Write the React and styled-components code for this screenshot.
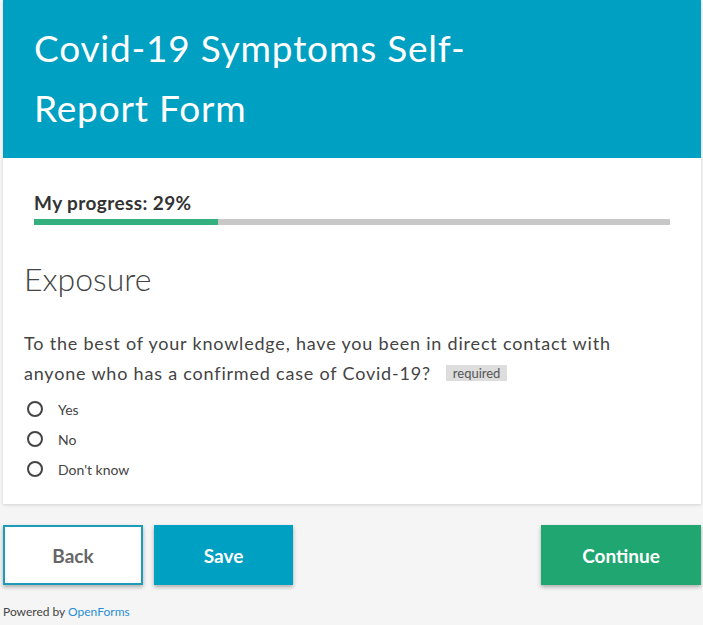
import React from "react";
import styled, { createGlobalStyle } from "styled-components";

const Global = createGlobalStyle`
  html, body { margin: 0; padding: 0; background: #f5f5f5; }
  body { font-family: Lato, "Open Sans", sans-serif; color: #444; }
`;

const Page = styled.div`
  padding: 0 2px 0 3px;
`;

const Card = styled.div`
  background: #fff;
  box-shadow: 0 1px 3px rgba(0, 0, 0, 0.15);
`;

const Header = styled.header`
  background: #00a0c2;
  padding: 18px 31px 20px;
`;

const Title = styled.h1`
  margin: 0;
  max-width: 500px;
  color: #fff;
  font-size: 37px;
  font-weight: 400;
  letter-spacing: 0.8px;
  line-height: 60px;
`;

const Body = styled.div`
  padding: 33px 21px 20px;
`;

const Progress = styled.div`
  padding: 0 10px;
`;

const ProgressLabel = styled.div`
  font-size: 19px;
  font-weight: 700;
  letter-spacing: 0.4px;
  color: #333;
  line-height: 24px;
`;

const Track = styled.div`
  margin-top: 4px;
  height: 6px;
  background: #c8c8c8;
`;

const Fill = styled.div`
  height: 100%;
  background: #33b07e;
`;

const Heading = styled.h2`
  margin: 34px 0 0;
  font-size: 32px;
  font-weight: 300;
  color: #444;
  line-height: 40px;
`;

const Question = styled.p`
  margin: 29px 0 0;
  font-size: 18px;
  letter-spacing: 0.8px;
  line-height: 30px;
  color: #444;
  max-width: 620px;
`;

const Badge = styled.span`
  display: inline-block;
  margin-left: 15px;
  padding: 0 7px;
  background: #ddd;
  color: #555;
  font-size: 13px;
  letter-spacing: 0;
  line-height: 16px;
  vertical-align: 2px;
`;

const Options = styled.div`
  margin-top: 6px;
  display: flex;
  flex-direction: column;
`;

const Option = styled.label`
  display: flex;
  align-items: center;
  gap: 15px;
  height: 30px;
  padding-left: 3px;
  font-size: 14px;
  color: #444;
`;

const Radio = styled.span`
  width: 12px;
  height: 12px;
  border: 2px solid #444;
  border-radius: 50%;
  flex: none;
`;

const Actions = styled.div`
  display: flex;
  align-items: center;
  gap: 11px;
  margin-top: 21px;
`;

const Button = styled.button`
  height: 60px;
  width: ${(p) => p.$w}px;
  border: 2px solid ${(p) => p.$border};
  background: ${(p) => p.$bg};
  color: ${(p) => p.$color};
  font-family: Lato, "Open Sans", sans-serif;
  font-size: 19px;
  font-weight: 700;
  box-shadow: 0 2px 4px rgba(0, 0, 0, 0.3);
  margin-left: ${(p) => (p.$push ? "auto" : "0")};
  cursor: pointer;
`;

const Footer = styled.div`
  margin-top: 19px;
  font-size: 12px;
  color: #444;
`;

const Link = styled.a`
  color: #2a8fd4;
  text-decoration: none;
`;

export default function App() {
  const progress = 29;
  return (
    <>
      <Global />
      <Page>
        <Card>
          <Header>
            <Title>Covid-19 Symptoms Self-Report Form</Title>
          </Header>
          <Body>
            <Progress>
              <ProgressLabel>My progress: {progress}%</ProgressLabel>
              <Track>
                <Fill style={{ width: `${progress}%` }} />
              </Track>
            </Progress>
            <Heading>Exposure</Heading>
            <Question>
              To the best of your knowledge, have you been in direct contact with
              anyone who has a confirmed case of Covid-19?
              <Badge>required</Badge>
            </Question>
            <Options>
              {["Yes", "No", "Don't know"].map((o) => (
                <Option key={o}>
                  <Radio />
                  {o}
                </Option>
              ))}
            </Options>
          </Body>
        </Card>
        <Actions>
          <Button $w={140} $border="#1d9bb7" $bg="#fff" $color="#666">
            Back
          </Button>
          <Button $w={139} $border="#00a0c2" $bg="#00a0c2" $color="#fff">
            Save
          </Button>
          <Button $w={160} $border="#20a670" $bg="#20a670" $color="#fff" $push>
            Continue
          </Button>
        </Actions>
        <Footer>
          Powered by <Link href="#">OpenForms</Link>
        </Footer>
      </Page>
    </>
  );
}
